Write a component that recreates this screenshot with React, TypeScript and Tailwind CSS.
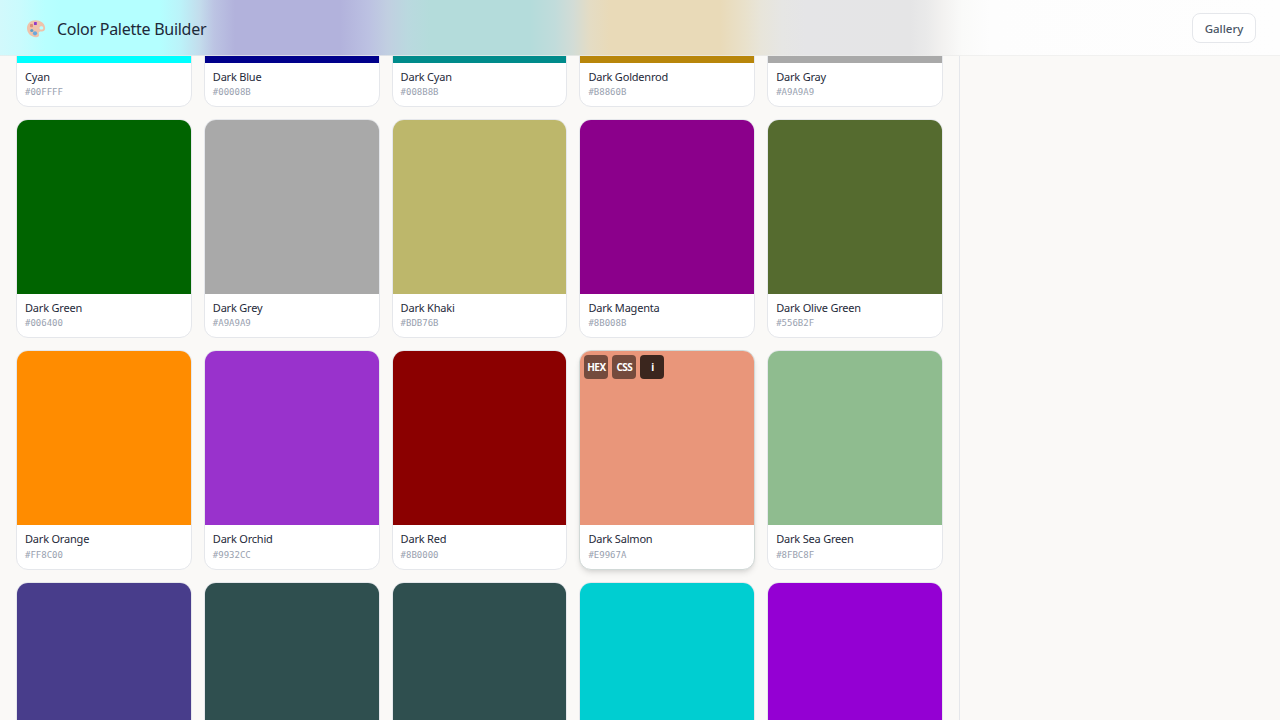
interface Color {
  name: string;
  hex: string;
}

const COLORS: Color[] = [
  { name: 'Cyan', hex: '#00FFFF' },
  { name: 'Dark Blue', hex: '#00008B' },
  { name: 'Dark Cyan', hex: '#008B8B' },
  { name: 'Dark Goldenrod', hex: '#B8860B' },
  { name: 'Dark Gray', hex: '#A9A9A9' },
  { name: 'Dark Green', hex: '#006400' },
  { name: 'Dark Grey', hex: '#A9A9A9' },
  { name: 'Dark Khaki', hex: '#BDB76B' },
  { name: 'Dark Magenta', hex: '#8B008B' },
  { name: 'Dark Olive Green', hex: '#556B2F' },
  { name: 'Dark Orange', hex: '#FF8C00' },
  { name: 'Dark Orchid', hex: '#9932CC' },
  { name: 'Dark Red', hex: '#8B0000' },
  { name: 'Dark Salmon', hex: '#E9967A' },
  { name: 'Dark Sea Green', hex: '#8FBC8F' },
  { name: 'Dark Slate Blue', hex: '#483D8B' },
  { name: 'Dark Slate Gray', hex: '#2F4F4F' },
  { name: 'Dark Slate Grey', hex: '#2F4F4F' },
  { name: 'Dark Turquoise', hex: '#00CED1' },
  { name: 'Dark Violet', hex: '#9400D3' },
];

function PaletteIcon() {
  return (
    <svg width="20" height="20" viewBox="0 0 20 20" aria-hidden="true">
      <path
        d="M9.5 1.3C4.6 1.3 1 4.7 1 9.3c0 4.7 3.7 8.7 9 8.9 2.1.1 3.3-1 3-2.5-.2-1.3-.7-2.1.2-2.8.9-.6 2.3 0 3.900-.6 1.500-.6 2.200-2 2-3.900C18.600 4.400 14.500 1.300 9.500 1.300zM15.400 7.300c1.100 0 1.900.7 1.900 1.600s-.8 1.600-1.900 1.600-1.900-.7-1.900-1.600.8-1.600 1.900-1.600z"
        fill="#efc3ab"
        fillRule="evenodd"
      />
      <rect x="8" y="3" width="2.8" height="3" rx="0.5" fill="#9038c8" />
      <rect x="4" y="5" width="3" height="3.2" rx="0.8" fill="#dc8e78" />
      <circle cx="5.8" cy="11.5" r="1.6" fill="#5f9fc8" />
      <circle cx="9" cy="14.3" r="2.1" fill="#6aa8dc" />
    </svg>
  );
}

function ColorCard({ color, active }: { color: Color; active: boolean }) {
  return (
    <div
      className={`relative overflow-hidden rounded-xl border bg-white ${
        active
          ? 'border-[#d1d9d7] shadow-[0_4px_6px_-1px_rgba(0,0,0,0.1),0_2px_4px_-2px_rgba(0,0,0,0.1)]'
          : 'border-gray-200'
      }`}
    >
      <div className="aspect-square w-full" style={{ backgroundColor: color.hex }} />
      <div className="h-[43.4px] px-2 pt-1.5">
        <div className="text-[11px] leading-[15px] tracking-[-0.2px] text-gray-800">
          {color.name}
        </div>
        <div className="mt-[1.3px] font-['DejaVu_Sans_Mono',monospace] text-[9px] leading-[14.2px] text-gray-400">
          {color.hex}
        </div>
      </div>
      {active && (
        <div className="absolute top-1 left-1 flex gap-1 text-[10px] font-bold tracking-[-0.5px] text-white">
          <button className="size-6 rounded bg-black/50 pt-px">HEX</button>
          <button className="size-6 rounded bg-black/50 pt-px">CSS</button>
          <button className="size-6 rounded bg-black/75 pt-px">i</button>
        </div>
      )}
    </div>
  );
}

export default function App() {
  const hovered = 'Dark Salmon';

  return (
    <div className="relative h-screen overflow-hidden bg-[#faf9f7] font-['Noto_Sans',sans-serif]">
      {/* Color list, scrolled under the header */}
      <div className="flex h-full">
        <main className="w-[960px] border-r border-gray-200 px-4">
          <div className="-mt-[112px] grid grid-cols-5 gap-3">
            {COLORS.map((color) => (
              <ColorCard key={color.name} color={color} active={color.name === hovered} />
            ))}
          </div>
        </main>
        <aside className="flex-1" />
      </div>

      {/* Header, frosted with the tint of the first row */}
      <header className="absolute inset-x-0 top-0 flex h-14 items-center justify-between border-b border-[#ebebea]/70 bg-white bg-[linear-gradient(90deg,#d2f9fc_0px,#cafbfd_20px,#b8ffff_45px,#b4ffff_60px,#b4ffff_160px,#bbf3f9_180px,#c3dcec_200px,#bcc4e3_214px,#b2b2dc_235px,#b2b2dc_340px,#bcc1e2_368px,#c1cfe1_388px,#bad9df_408px,#b4dcdb_430px,#b4dcdb_530px,#c1dcdb_555px,#d2dcd6_573px,#e4dcc4_590px,#e9dab8_610px,#e9dab8_720px,#e9e1cb_745px,#e8e5da_761px,#e6e6e4_782px,#e5e5e7_805px,#e5e5e6_910px,#eaeaea_927px,#f2f1f0_942px,#fafaf9_962px,#fdfdfd_990px,#fefefe_1280px)] px-6">
        <div className="flex items-center gap-3 pt-0.5">
          <span className="-mr-px pl-0.5">
            <PaletteIcon />
          </span>
          <h1 className="text-base leading-6 tracking-[-0.27px] text-gray-800">
            Color Palette Builder
          </h1>
        </div>
        <button className="h-[30px] w-16 rounded-lg border border-gray-200 bg-white pt-0.5 text-[11.5px] font-medium text-gray-600">
          Gallery
        </button>
      </header>
    </div>
  );
}
